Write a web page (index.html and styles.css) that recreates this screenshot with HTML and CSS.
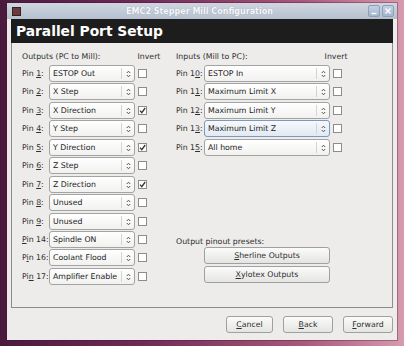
FILE: index.html
```html
<!DOCTYPE html>
<html lang="en">
<head>
  <meta charset="UTF-8">
  <title>EMC2 Stepper Mill Configuration</title>
  <link rel="stylesheet" href="styles.css">
</head>
<body>
  <div class="window">
    <div class="titlebar">
      <span class="app-icon"></span>
      <span class="title">EMC2 Stepper Mill Configuration</span>
      <span class="wbtns">
        <span class="wbtn"><svg width="8" height="8" viewBox="0 0 8 8"><path d="M1.5 6.5h5" stroke="#fff" stroke-width="1.4"/></svg></span>
        <span class="wbtn"><svg width="8" height="8" viewBox="0 0 8 8"><path d="M1.5 1.5l5 5M6.5 1.5l-5 5" stroke="#fff" stroke-width="1.3"/></svg></span>
      </span>
    </div>

    <div class="page">
      <div class="header">Parallel Port Setup</div>
      <div class="frame">
        <div class="col col-out">
          <div class="head"><span>Outputs (PC to Mill):</span><span class="inv">Invert</span></div>
          <div class="pins">
            <span>Pin <u>1</u>:</span><div class="combo">ESTOP Out</div><span class="chk"></span>
            <span>Pin <u>2</u>:</span><div class="combo">X Step</div><span class="chk"></span>
            <span>Pin <u>3</u>:</span><div class="combo">X Direction</div><span class="chk on"></span>
            <span>Pin <u>4</u>:</span><div class="combo">Y Step</div><span class="chk"></span>
            <span>Pin <u>5</u>:</span><div class="combo">Y Direction</div><span class="chk on"></span>
            <span>Pin <u>6</u>:</span><div class="combo">Z Step</div><span class="chk"></span>
            <span>Pin <u>7</u>:</span><div class="combo">Z Direction</div><span class="chk on"></span>
            <span>Pin <u>8</u>:</span><div class="combo">Unused</div><span class="chk"></span>
            <span>Pin <u>9</u>:</span><div class="combo">Unused</div><span class="chk"></span>
            <span><u>P</u>in 14:</span><div class="combo">Spindle ON</div><span class="chk"></span>
            <span>P<u>i</u>n 16:</span><div class="combo">Coolant Flood</div><span class="chk"></span>
            <span>Pi<u>n</u> 17:</span><div class="combo">Amplifier Enable</div><span class="chk"></span>
          </div>
        </div>

        <div class="col col-in">
          <div class="head"><span>Inputs (Mill to PC):</span><span class="inv">Invert</span></div>
          <div class="pins">
            <span>Pin 1<u>0</u>:</span><div class="combo">ESTOP In</div><span class="chk"></span>
            <span>Pin 1<u>1</u>:</span><div class="combo">Maximum Limit X</div><span class="chk"></span>
            <span>Pin 1<u>2</u>:</span><div class="combo">Maximum Limit Y</div><span class="chk"></span>
            <span>Pin 1<u>3</u>:</span><div class="combo hover">Maximum Limit Z</div><span class="chk"></span>
            <span>Pin 1<u>5</u>:</span><div class="combo">All home</div><span class="chk"></span>
          </div>
          <div class="presets">
            <div class="presets-label">Output pinout presets:</div>
            <div class="btn wide"><u>S</u>herline Outputs</div>
            <div class="btn wide"><u>X</u>ylotex Outputs</div>
          </div>
        </div>
      </div>
    </div>

    <div class="actions">
      <div class="btn"><u>C</u>ancel</div>
      <div class="btn"><u>B</u>ack</div>
      <div class="btn"><u>F</u>orward</div>
    </div>
  </div>
</body>
</html>
```

FILE: styles.css
```css
html, body {
  margin: 0;
  height: 100%;
}
body {
  width: 404px;
  height: 346px;
  overflow: hidden;
  font-family: "DejaVu Sans", sans-serif;
  font-size: 7.8px;
  color: #2e2e2e;
  background: linear-gradient(90deg, #4a1a3c 0%, #6e2a55 35%, #a9587a 75%, #d79aae 100%);
  padding-top: 3px;
  box-sizing: border-box;
}
u {
  text-decoration: underline;
  text-underline-offset: 1px;
}
.window {
  margin-left: 7px;
  width: 390px;
  height: 337px;
  background: #edeceb;
  display: flex;
  flex-direction: column;
  box-shadow: 0 0 0 1px rgba(60, 20, 50, 0.35);
}

/* title bar */
.titlebar {
  height: 16px;
  display: flex;
  align-items: center;
  padding: 0 3px 0 5px;
  background: linear-gradient(#cfd6e0, #b5c0cf);
  font-size: 8px;
}
.app-icon {
  width: 7px;
  height: 7px;
  background: #6b3a3a;
  border: 1px solid #3a2020;
}
.title {
  flex: 1;
  text-align: center;
  font-weight: bold;
  color: #f7f8fa;
  text-shadow: 0 0 1px #8f9aa9;
  padding-left: 10px;
}
.wbtns {
  display: flex;
  gap: 2px;
}
.wbtn {
  width: 10px;
  height: 10px;
  border: 1px solid #8ea0b8;
  border-radius: 2px;
  background: linear-gradient(#c3d0e2, #a3b5cd);
  display: flex;
  align-items: center;
  justify-content: center;
}

/* page */
.page {
  margin: 0 4px;
}
.header {
  height: 24px;
  background: #1d1d1d;
  color: #fff;
  font-weight: bold;
  font-size: 13.8px;
  line-height: 25px;
  padding-left: 5px;
}
.frame {
  height: 265px;
  border: 1px solid #8c8c8a;
  border-top: none;
  display: flex;
  padding: 8px 0 0 10px;
  box-sizing: border-box;
}
.col-out {
  width: 154px;
}
.head {
  display: flex;
  height: 12px;
  line-height: 12px;
  margin-bottom: 2px;
  white-space: nowrap;
}
.col-out .inv {
  margin-left: 37px;
}
.col-in .inv {
  margin-left: 77px;
}
.pins {
  display: grid;
  grid-template-columns: 27px 86px 14px;
  grid-auto-rows: 17px;
  row-gap: 1.45px;
  align-items: center;
  white-space: nowrap;
}
.col-in .pins {
  grid-template-columns: 28px 126px 14px;
}
.combo {
  height: 17px;
  box-sizing: border-box;
  border: 1px solid #a3a3a1;
  border-radius: 3px;
  background: linear-gradient(#ffffff, #f1f1f0);
  padding-left: 3px;
  line-height: 15px;
  position: relative;
  color: #222;
}
.combo::before {
  content: "";
  position: absolute;
  right: 12px;
  top: 2px;
  bottom: 2px;
  border-left: 1px solid #d4d4d2;
}
.combo::after {
  content: "";
  position: absolute;
  right: 3px;
  top: 4px;
  width: 5px;
  height: 8px;
  background: url("data:image/svg+xml,%3Csvg xmlns='http://www.w3.org/2000/svg' width='5' height='8'%3E%3Cpath d='M0.8 3L2.5 1.2L4.2 3M0.8 5L2.5 6.8L4.2 5' fill='none' stroke='%23555' stroke-width='1'/%3E%3C/svg%3E") no-repeat;
}
.combo.hover {
  border-color: #7d98bd;
  background: linear-gradient(#f6f9fc, #e1e9f2);
}
.chk {
  width: 7px;
  height: 7px;
  border: 1px solid #8c8c8a;
  background: #fff;
  margin-left: 3px;
}
.chk.on {
  background: #fff url("data:image/svg+xml,%3Csvg xmlns='http://www.w3.org/2000/svg' width='7' height='7'%3E%3Cpath d='M1 3.6L2.8 5.6L6.2 1' fill='none' stroke='%23333' stroke-width='1.3'/%3E%3C/svg%3E") no-repeat;
}
.presets {
  margin-top: 80px;
}
.presets-label {
  height: 11px;
  line-height: 11px;
}
.btn {
  height: 17px;
  box-sizing: border-box;
  border: 1px solid #a0a09e;
  border-radius: 3px;
  background: linear-gradient(#fbfbfb, #e4e4e2);
  text-align: center;
  line-height: 15px;
  color: #2e2e2e;
}
.btn.wide {
  width: 126px;
  margin-left: 28px;
  margin-bottom: 2px;
}

/* bottom buttons */
.actions {
  display: flex;
  justify-content: flex-end;
  gap: 10px;
  padding: 8px 4px 0 0;
}
.actions .btn {
  width: 47px;
}
.actions .btn:nth-child(2) {
  width: 50px;
}
.actions .btn:nth-child(3) {
  width: 50px;
}
```
